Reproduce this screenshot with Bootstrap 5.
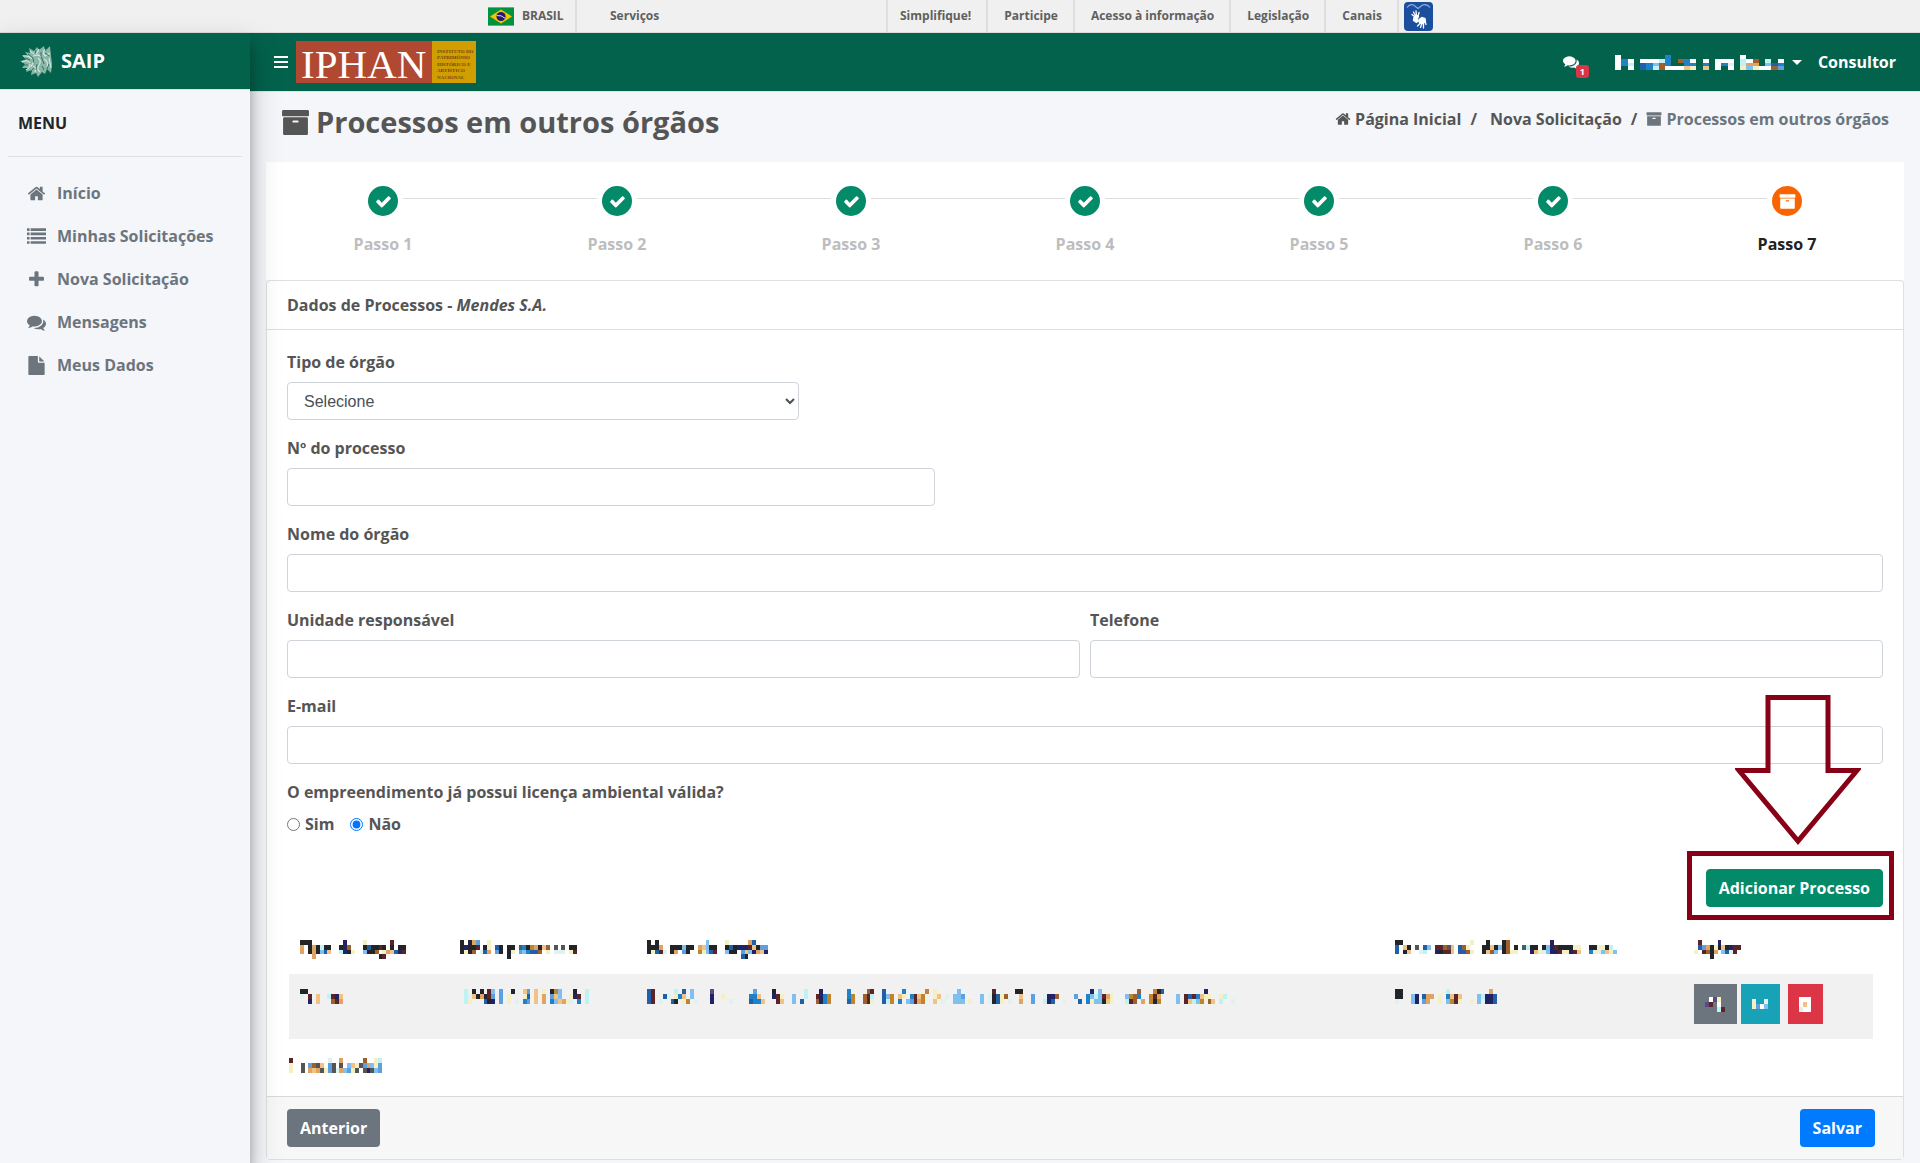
<!DOCTYPE html>
<html lang="pt-BR">
<head>
<meta charset="utf-8">
<meta name="viewport" content="width=device-width, initial-scale=1">
<title>SAIP - Processos em outros órgãos</title>
<link rel="stylesheet" href="https://cdn.jsdelivr.net/npm/bootstrap@5.3.0/dist/css/bootstrap.min.css">
<style>
:root { --saip-green: #03624c; --saip-action: #038a68; --saip-text: #555; --saip-line: #dfdfdf; }
body { font-family: "Open Sans", sans-serif; font-size: 16px; font-weight: 700; line-height: 24px; color: var(--saip-text); background: #f4f6f9; }
a { color: inherit; text-decoration: none; }
.ico { fill: currentColor; width: 19px; height: 19px; flex: none; }
.ico-sm { width: 16px; height: 16px; }
.ico-step { width: 17px; height: 17px; }
.ico-title { width: 29px; height: 29px; }
.pixels { display: block; shape-rendering: crispEdges; }

.gov-bar { height: 33px; background: #f0f0f0; border-bottom: 1px solid #dcdcdc; font-size: 12px; line-height: 32px; color: #606060; padding-left: 488px; }
.gov-brand { gap: 8px; width: 87px; }
.gov-service { width: 311px; padding-left: 33px; }
.gov-cell { border-left: 2px solid #dedede; }
.gov-link { padding: 0 15px 0 16px; }
.gov-first { padding: 0 15px 0 12px; }
.gov-sign { padding: 2px 5px; }

.side { width: 250px; z-index: 3; background: #f4f6f9; box-shadow: 0 14px 28px rgba(0,0,0,.25), 0 10px 10px rgba(0,0,0,.22); }
.side-brand { height: 57px; background: var(--saip-green); border-bottom: 1px solid #dee2e6; color: #fff; font-size: 20px; padding-left: 20px; gap: 7px; }
.side-title { padding: 21px 10px; color: #212529; border-bottom: 1px solid #dee2e6; }
.side-nav { padding: 16px 0; gap: 3px; }
.side-link { height: 40px; padding-left: 19px; gap: 11px; color: #6c757d; }

.top { height: 59px; background: var(--saip-green); color: #fff; border-bottom: 1px solid #dee2e6; padding: 0 24px; }
.btn-plain { border: 0; background: none; padding: 0; color: inherit; font-weight: 700; }
.brand-logo { overflow: visible; }
.msg-badge { position: absolute; left: 13px; top: 11px; width: 13px; height: 13px; padding: 0; border-radius: 3px; background: #dc3545; font-size: 9px; line-height: 13px; }
.caret { border: 5px solid transparent; border-top-color: #fff; border-bottom: 0; }

.page-title { font-size: 29px; line-height: 36px; font-weight: 700; gap: 6px; }
.page-head { height: 70px; padding: 12px 15px 0 15px; }
.crumbs { line-height: 30px; gap: 9px; }

.content-pad { padding: 0 16px 3px; }
.steps { background: #fff; padding: 24px 0; height: 118px; }
.step { position: relative; color: #bdbdbd; gap: 16px; }
.step-dot { width: 30px; height: 30px; border-radius: 50%; background: var(--saip-action); color: #fff; }
.step:not(:last-child)::after { content: ""; position: absolute; top: 12px; left: calc(50% + 20px); width: calc(100% - 40px); border-top: 1px solid #dedede; }
.step.now { color: #212121; }
.step.now .step-dot { background: #fa6400; }

.panel { background: #fff; border: 1px solid var(--saip-line); border-radius: 4px; }
.panel-head { padding: 12px 20px; border-bottom: 1px solid var(--saip-line); }
.panel-body { padding: 20px 20px 23px; }
.panel-foot { padding: 12px 28px 12px 20px; background: #f7f7f7; border-top: 1px solid #d9d9d9; }
.field { margin-bottom: 16px; }
.field label, .legend-line { display: block; margin-bottom: 8px; }
.ctl { height: 38px; border: 1px solid #ced4da; border-radius: 4px; background-color: #fff; color: #495057; font: 400 16px/24px "Liberation Sans", Arial, sans-serif; }
select.ctl { appearance: auto; padding: 6px 12px; width: 32.1%; }
.ctl-mid { width: 40.6%; }
.pair { gap: 10px; }
.choice { gap: 5px; }
.choice input { width: 13px; height: 13px; margin: 0; }
.btn { --bs-btn-border-radius: 4px; font-weight: 700; }
.btn-action { background: var(--saip-action); border-color: var(--saip-action); color: #fff; }
.btn-back { background: #6c757d; color: #fff; }
.btn-save { background: #007bff; color: #fff; }

.add-row { padding-top: 33px; }
.add-wrap { position: relative; }
.callout-box { position: absolute; inset: -18px -11px -13px -19px; border: 5px solid #880015; pointer-events: none; }
.callout-arrow { position: absolute; right: 22px; bottom: 62px; pointer-events: none; }

.list-table { margin: 23px 10px 19px 2px; width: calc(100% - 12px); table-layout: fixed; }
.list-table th, .list-table td { padding: 0 0 0 11px; vertical-align: top; }
.list-table th { height: 44px; padding-top: 10px; }
.list-table td { height: 65px; padding-top: 15px; background: #f1f1f1; }
.list-table td.acts { padding-top: 10px; }
.act { border: 0; padding: 0; height: 40px; }
.act-edit { width: 43px; background: #6c757d; margin-right: 4px; }
.act-file { width: 39px; background: #17a2b8; margin-right: 8px; }
.act-del { width: 35px; background: #dc3545; }
.summary { padding-left: 2px; }
</style>
<script src="https://cdn.jsdelivr.net/npm/bootstrap@5.3.0/dist/js/bootstrap.bundle.min.js"></script>
</head>
<body>
<svg width="0" height="0" class="position-absolute" aria-hidden="true">
  <symbol id="i-home" viewBox="0 0 1792 1792"><path d="M1472 992v480q0 26-19 45t-45 19h-384v-384h-256v384h-384q-26 0-45-19t-19-45v-480q0-1 .5-3t.5-3l575-474 575 474q1 2 1 6zm223-69l-62 74q-8 9-21 11h-3q-13 0-21-7l-692-577-692 577q-12 8-24 7-13-2-21-11l-62-74q-8-10-7-23.5t11-21.5l719-599q32-26 76-26t76 26l244 204v-195q0-14 9-23t23-9h192q14 0 23 9t9 23v408l219 182q10 8 11 21.5t-7 23.5z"/></symbol>
  <symbol id="i-list" viewBox="0 0 1792 1792"><path d="M0 128h240v250H0zM340 128h1452v250H340zM0 530h240v250H0zM340 530h1452v250H340zM0 932h240v250H0zM340 932h1452v250H340zM0 1334h240v250H0zM340 1334h1452v250H340z"/></symbol>
  <symbol id="i-plus" viewBox="0 0 1792 1792"><path d="M1600 736v192q0 40-28 68t-68 28h-416v416q0 40-28 68t-68 28h-192q-40 0-68-28t-28-68v-416h-416q-40 0-68-28t-28-68v-192q0-40 28-68t68-28h416v-416q0-40 28-68t68-28h192q40 0 68 28t28 68v416h416q40 0 68 28t28 68z"/></symbol>
  <symbol id="i-talk" viewBox="0 0 1792 1792"><path d="M1408 768q0 139-94 257t-256.5 186.5-353.5 68.5q-86 0-176-16-124 88-278 128-36 9-86 16h-3q-11 0-20.5-8t-11.5-21q-1-3-1-6.500t.5-6.500 2-6l2.500-5 3.500-5.500 4-5 4.500-5 4-4.500q5-6 23-25t26-29.500 22.500-29 25-38.500 20.500-44q-124-72-195-177t-71-224q0-139 94-257t256.500-186.500 353.500-68.500 353.500 68.500 256.500 186.500 94 257zm384 256q0 120-71 224.500t-195 176.500q10 24 20.500 44t25 38.500 22.500 29 26 29.500 23 25q1 1 4 4.500t4.500 5 4 5 3.500 5.500l2.500 5 2 6 .5 6.500-1 6.500q-3 14-13 22t-22 7q-50-7-86-16-154-40-278-128-90 16-176 16-271 0-472-132 58 4 88 4 161 0 309-45t264-129q125-92 192-212t67-254q0-77-23-152 129 71 204 178t75 230z"/></symbol>
  <symbol id="i-file" viewBox="0 0 1792 1792"><path d="M1152 512v-472q22 14 36 28l408 408q14 14 28 36h-472zm-128 32q0 40 28 68t68 28h544v1056q0 40-28 68t-68 28h-1344q-40 0-68-28t-28-68v-1600q0-40 28-68t68-28h800v544z"/></symbol>
  <symbol id="i-box" viewBox="0 0 1792 1792"><path d="M1088 832q0-26-19-45t-45-19h-256q-26 0-45 19t-19 45 19 45 45 19h256q26 0 45-19t19-45zm576-192v960q0 26-19 45t-45 19h-1408q-26 0-45-19t-19-45v-960q0-26 19-45t45-19h1408q26 0 45 19t19 45zm64-448v256q0 26-19 45t-45 19h-1536q-26 0-45-19t-19-45v-256q0-26 19-45t45-19h1536q26 0 45 19t19 45z"/></symbol>
  <symbol id="i-check" viewBox="0 0 1792 1792"><path d="M1671 566q0 40-28 68l-724 724-136 136q-28 28-68 28t-68-28l-136-136-362-362q-28-28-28-68t28-68l136-136q28-28 68-28t68 28l294 295 656-657q28-28 68-28t68 28l136 136q28 28 28 68z"/></symbol>
</svg>

<div class="d-flex flex-column min-vh-100">
<div class="gov-bar d-flex">
  <a href="#" class="gov-brand d-flex align-items-center">
    <svg width="26" height="19" viewBox="0 0 26 19"><path fill="#5bb77c" d="M0 0h26v19H0z"/><path fill="#00923f" d="M0 1h26v17H0z"/><path fill="#f8c300" d="M13 2.500 24 9.500 13 16.500 2 9.500z"/><circle cx="13" cy="9.500" r="4.600" fill="#28166f"/><path d="M8.800 8.600q4.500-.8 8.200 2.600" fill="none" stroke="#dcd8ee"/></svg>
    BRASIL
  </a>
  <div class="gov-cell gov-service"><a href="#">Serviços</a></div>
  <a href="#" class="gov-cell gov-first">Simplifique!</a>
  <a href="#" class="gov-cell gov-link">Participe</a>
  <a href="#" class="gov-cell gov-link">Acesso à informação</a>
  <a href="#" class="gov-cell gov-link">Legislação</a>
  <a href="#" class="gov-cell gov-link">Canais</a>
  <a href="#" class="gov-cell gov-sign d-flex" aria-label="VLibras">
    <svg width="29" height="29" viewBox="0 0 29 29"><rect width="29" height="29" rx="4" fill="#1b4f9e"/><path d="M3 5.500Q6 1.500 9.500 3L14 6.500 18.500 3Q23 1.500 26 5.500" fill="none" stroke="#8fb0de" stroke-width="1.200"/><g stroke="#fff" stroke-linecap="round" stroke-width="1.300" fill="#fff"><path d="M11 15 8 12.500M11.500 14 9.500 10M12.500 14 12 9M14 14.500 15 10.500"/><path d="M10 15.500 13 13.500 14.500 14.500 13 17.500 14.500 19 12.500 20.500 9.500 18.500z"/><path d="M15 17.500 18 15.500 21 16.500 21.500 19.500 19 21.500 15.500 21z"/><path d="M16.500 21 13.500 24M18 21 16.500 25.500M19.500 21.500 19.500 26M21 19 22 22.500"/></g></svg>
  </a>
</div>

<div class="d-flex flex-grow-1">
  <aside class="side flex-shrink-0">
    <a href="#" class="side-brand d-flex align-items-center">
      <svg width="34" height="34" viewBox="0 0 34 34"><path fill="#8bb5a6" d="M9 4 14 7 17 3 19 6 24 2 25 7 30 2 31 12 32 20 31 29 27 25 25 30 22 28 18 33 16 29 11 31 12 26 6 28 8 24 2 24 5 20 0 17 6 16 2 11 8 12 5 8 10 9z"/><g fill="none" stroke="#d3e5de" stroke-width="1.200"><path d="M3 12Q9 11 12 15M2 18Q7 15 10 19M6 26Q10 24 10 20M10 7Q13 11 17 9L19 5M25 5Q22 9 25 12L30 9M18 14Q22 17 19 21T20 28M24 15Q29 18 27 23M13 22Q17 23 15 28M13 12 18 11 22 13M14 17 11 23M29 14 31 24"/></g><g fill="none" stroke="#2b7a65"><path d="M5 14 10 16M8 10 13 14 14 19M21 8 21 12 24 20M16 6 15 10M17 20 16 26M4 21 8 21M25 9 29 12M22 22 24 26M11 27 14 24M27 25 29 20"/></g></svg>
      SAIP
    </a>
    <div class="px-2"><div class="side-title">MENU</div></div>
    <nav class="side-nav d-flex flex-column px-2">
      <a href="#" class="side-link d-flex align-items-center"><svg class="ico"><use href="#i-home"/></svg>Início</a>
      <a href="#" class="side-link d-flex align-items-center"><svg class="ico"><use href="#i-list"/></svg>Minhas Solicitações</a>
      <a href="#" class="side-link d-flex align-items-center"><svg class="ico"><use href="#i-plus"/></svg>Nova Solicitação</a>
      <a href="#" class="side-link d-flex align-items-center"><svg class="ico"><use href="#i-talk"/></svg>Mensagens</a>
      <a href="#" class="side-link d-flex align-items-center"><svg class="ico"><use href="#i-file"/></svg>Meus Dados</a>
    </nav>
  </aside>

  <div class="flex-grow-1">
    <header class="top d-flex align-items-center">
      <button type="button" class="btn-plain d-flex me-2" aria-label="Menu"><svg width="14" height="12" viewBox="0 0 14 12"><path fill="#fff" d="M0 0h14v2H0zM0 5h14v2H0zM0 10h14v2H0z"/></svg></button>
      <svg class="brand-logo" width="180" height="42" viewBox="0 0 180 42" role="img" aria-label="IPHAN">
        <path fill="#b14831" d="M0 0h136v42H0z"/><path fill="#d29d00" d="M136 0h44v42h-44z"/>
        <text x="5" y="37" font-family="Liberation Serif, serif" font-weight="400" font-size="41" fill="#fff">IPHAN</text>
        <g font-family="Liberation Serif, serif" font-weight="700" font-size="5" fill="#6b4a10"><text x="141" y="12">INSTITUTO DO</text><text x="141" y="18">PATRIMÔNIO</text><text x="141" y="25">HISTÓRICO E</text><text x="141" y="31">ARTÍSTICO</text><text x="141" y="38">NACIONAL</text></g>
      </svg>
      <div class="d-flex align-items-center ms-auto">
        <a href="#" class="position-relative d-flex me-4 pe-2" aria-label="Mensagens"><svg class="ico ico-sm"><use href="#i-talk"/></svg><span class="msg-badge badge">1</span></a>
        <button type="button" class="btn-plain d-flex align-items-center ms-1 me-3" aria-label="Usuário">
          <svg class="pixels me-2" width="169" height="15" data-cols="27" data-rows="0X8D20X|0XDX4XXXC8D10RD12X14X16XX18X20CX22R24C26X|0X1DC4BDLR8D11DD14D16XD18W20COO24LBD|0X2X4BDCR8XXXP12Y14P16X18X20YLY23XXRS"></svg>
          <span class="caret"></span>
        </button>
        <span>Consultor</span>
      </div>
    </header>

    <main class="content-pad">
      <div class="page-head d-flex justify-content-between align-items-start">
        <h1 class="page-title d-flex align-items-center m-0"><svg class="ico ico-title"><use href="#i-box"/></svg>Processos em outros órgãos</h1>
        <nav class="crumbs d-flex">
          <a href="#" class="d-flex align-items-center gap-1"><svg class="ico ico-sm"><use href="#i-home"/></svg>Página Inicial</a><span>/</span>
          <a href="#" class="ps-1">Nova Solicitação</a><span>/</span>
          <span class="d-flex align-items-center gap-1 text-secondary"><svg class="ico ico-sm"><use href="#i-box"/></svg>Processos em outros órgãos</span>
        </nav>
      </div>

      <div class="steps row g-0">
        <div class="step col d-flex flex-column align-items-center"><span class="step-dot d-flex align-items-center justify-content-center"><svg class="ico ico-step"><use href="#i-check"/></svg></span>Passo 1</div>
        <div class="step col d-flex flex-column align-items-center"><span class="step-dot d-flex align-items-center justify-content-center"><svg class="ico ico-step"><use href="#i-check"/></svg></span>Passo 2</div>
        <div class="step col d-flex flex-column align-items-center"><span class="step-dot d-flex align-items-center justify-content-center"><svg class="ico ico-step"><use href="#i-check"/></svg></span>Passo 3</div>
        <div class="step col d-flex flex-column align-items-center"><span class="step-dot d-flex align-items-center justify-content-center"><svg class="ico ico-step"><use href="#i-check"/></svg></span>Passo 4</div>
        <div class="step col d-flex flex-column align-items-center"><span class="step-dot d-flex align-items-center justify-content-center"><svg class="ico ico-step"><use href="#i-check"/></svg></span>Passo 5</div>
        <div class="step col d-flex flex-column align-items-center"><span class="step-dot d-flex align-items-center justify-content-center"><svg class="ico ico-step"><use href="#i-check"/></svg></span>Passo 6</div>
        <div class="step now col d-flex flex-column align-items-center"><span class="step-dot d-flex align-items-center justify-content-center"><svg class="ico ico-step"><use href="#i-box"/></svg></span>Passo 7</div>
      </div>

      <form class="panel">
        <div class="panel-head">Dados de Processos - <em>Mendes S.A.</em></div>
        <div class="panel-body">
          <div class="field"><label for="tipo">Tipo de órgão</label><select id="tipo" class="ctl form-control"><option>Selecione</option></select></div>
          <div class="field"><label for="numero">Nº do processo</label><input id="numero" type="text" class="ctl ctl-mid form-control"></div>
          <div class="field"><label for="nome">Nome do órgão</label><input id="nome" type="text" class="ctl form-control"></div>
          <div class="pair d-flex">
            <div class="field flex-fill"><label for="unidade">Unidade responsável</label><input id="unidade" type="text" class="ctl form-control"></div>
            <div class="field flex-fill"><label for="fone">Telefone</label><input id="fone" type="tel" class="ctl form-control"></div>
          </div>
          <div class="field"><label for="email">E-mail</label><input id="email" type="email" class="ctl form-control"></div>
          <div role="radiogroup" aria-labelledby="lic">
            <span id="lic" class="legend-line">O empreendimento já possui licença ambiental válida?</span>
            <div class="d-flex gap-3">
              <label class="choice d-flex align-items-center"><input type="radio" name="licenca">Sim</label>
              <label class="choice d-flex align-items-center"><input type="radio" name="licenca" checked>Não</label>
            </div>
          </div>
          <div class="add-row d-flex justify-content-end">
            <div class="add-wrap">
              <button type="button" class="btn btn-action">Adicionar Processo</button>
              <div class="callout-box"></div>
              <svg class="callout-arrow" width="126" height="150" viewBox="0 0 126 150"><path d="M33 2.500H93V75.500H122L63 146 4 75.500H33z" fill="none" stroke="#880015" stroke-width="5"/></svg>
            </div>
          </div>
          <table class="list-table">
            <colgroup><col style="width:10.1%"><col style="width:11.8%"><col style="width:47.2%"><col style="width:18.9%"><col style="width:12%"></colgroup>
            <thead><tr>
              <th><svg class="pixels" width="106" height="19" data-cols="27" data-rows="0KKK11N16Y23M|0O2KOKCKK10KNR16KBKKM21K23K.KK|0O2KOKLBP10CNKY16LKKRXYO23PBNM|3O20KM"></svg></th>
              <th><svg class="pixels" width="117" height="19" data-cols="30" data-rows="0K2KOS7Y|0KNKKM6KY9BK12KK15TDKGOKP22R24J26J28KK|0KY2KR5W6BO9SK12KY15SLDBBR22Y24WWW28YM|12K"></svg></th>
              <th><svg class="pixels" width="121" height="19" data-cols="31" data-rows="0K2K15L20Y26OB|0K1KKO6KKKLKK13OPLKK20KBKNNNMPKS30S|0KYBMW6KO9SK13GYLBM20LKK24SP26LNO29PN|24BK"></svg></th>
              <th><svg class="pixels" width="222" height="19" data-cols="56" data-rows="0KK19Y23K27KR39N|0B2PK5J7BL10MMRJP16BRY22KKPKL27KR30K32TC34KK37KLN40MKKKKYY49KKYYKC|0B2KP6WC10NKMMP16BBRY22KPR25L27KRYY34NPYW38LNNMYYNMP49DYWLPYL|"></svg></th>
              <th><svg class="pixels" width="47" height="19" data-cols="12" data-rows="1M6N|1BSOKYKPKNMM|0Y2MRKO7LBWM|4K"></svg></th>
            </tr></thead>
            <tbody><tr>
              <td><svg class="pixels" width="43" height="15" data-cols="11" data-rows="0KK|0W2M4P7CMNP|2N4P8RMO"></svg></td>
              <td><svg class="pixels ms-1" width="125" height="15" data-cols="32" data-rows="0C2K4K6ML9S12K15PS18P20Y22KGL28K31C|0C1WPKO5KMS9S11Y15YB18P20O22SPL27YN29M31C|0CY5BKN9S11Y13W15DS18P20O22DLPO26YW29D31C"></svg></td>
              <td><svg class="pixels" width="588" height="15" data-cols="150" data-rows="0BM7C9B11L16V27S32K40C44N51D56RM60B65D71G73Y79L88M94KK113N115L125R129GKB142N|0BM4BW7YDP11L16N19Y26DDP32NM34Y37L40C43MN45DG51DG55RM57C60BL62G64PY67DMPG73YP76W78LLS85L87WKBYR95P98S101WNNR109S112DLCL116MOY122LGRD128GMO135L137MBMDPYY146YC|0BM3W6BK9YG12W16N21W26BDDP33MP37L39B43RN45DG51BG55RMY60BC62G64D66LSMOG73P75W78LLL82Y85L87WKBY92W95O98S101CNB106W110B112DYLL116KPY122CMR126O128GKG135L137MPCLG143RP146C149W"></svg></td>
              <td><svg class="pixels" width="102" height="15" data-cols="26" data-rows="0KK13C24O|0KK4LN7BOO11Y13DPMP21LC23NNB|0W4LN7SO11Y13LGMY19Y21LW23NNB"></svg></td>
              <td class="acts"><div class="d-flex">
                <button type="button" class="act act-edit d-flex align-items-center justify-content-center" aria-label="Editar"><svg class="pixels" width="20" height="15" data-cols="5" data-rows="1XVY|0VM3X|3CM"></svg></button>
                <button type="button" class="act act-file d-flex align-items-center justify-content-center" aria-label="Arquivo"><svg class="pixels" width="16" height="10" data-cols="4" data-rows="0Y3W|0YSXL"></svg></button>
                <button type="button" class="act act-del d-flex align-items-center justify-content-center" aria-label="Excluir"><svg class="pixels" width="12" height="15" data-cols="3" data-rows="0XXX|0XPX|0WXX"></svg></button>
              </div></td>
            </tr></tbody>
          </table>
          <div class="summary"><svg class="pixels" width="93" height="15" data-cols="24" data-rows="0M10W13O19R22YC|0Y3J5SRJP10SJ13J15LPY18JSOL22YS|0Y3J5OPOJY10SJWOLSY17J19JNJL23S"></svg></div>
        </div>
        <div class="panel-foot d-flex justify-content-between">
          <button type="button" class="btn btn-back">Anterior</button>
          <button type="submit" class="btn btn-save">Salvar</button>
        </div>
      </form>
    </main>
  </div>
</div>
</div>
<script>
// Pixelated fields: rows split by "|"; a number moves to that column, each letter paints one cell.
const tones = { K:'#212529', N:'#212364', M:'#5a2428', R:'#a0602b', O:'#e0a462', P:'#f2c184', Y:'#f5f0c0', C:'#bff2f2', L:'#7fc0f0', B:'#2060a8', D:'#2080c8', G:'#c0842a', W:'#dff2f0', S:'#5ca0e0', V:'#5a4a80', J:'#555555', T:'#3a6468', X:'#ffffff' };
document.querySelectorAll('.pixels').forEach(svg => {
  const rows = svg.dataset.rows.split('|');
  svg.setAttribute('viewBox', `0 0 ${svg.dataset.cols} ${rows.length}`);
  svg.setAttribute('preserveAspectRatio', 'none');
  rows.forEach((row, y) => {
    let x = 0;
    for (const [t] of row.matchAll(/\d+|./g)) {
      if (/\d/.test(t)) { x = +t; continue; }
      if (tones[t]) {
        const r = document.createElementNS('http://www.w3.org/2000/svg', 'rect');
        r.setAttribute('x', x); r.setAttribute('y', y);
        r.setAttribute('width', 1); r.setAttribute('height', 1);
        r.setAttribute('fill', tones[t]);
        svg.append(r);
      }
      x++;
    }
  });
});
</script>
</body>
</html>
